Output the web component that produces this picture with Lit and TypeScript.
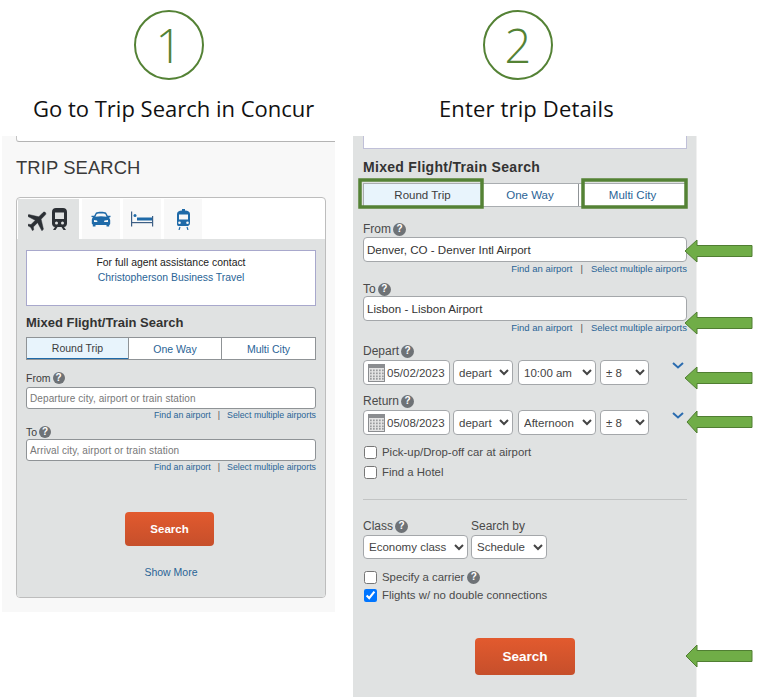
import { LitElement, html, css, svg } from "lit";
import { customElement } from "lit/decorators.js";

const help = html`<span class="help">?</span>`;

const planeTrainIcon = html`<svg class="ico" width="41" height="24" viewBox="0 0 41 24" aria-hidden="true">
  <g fill="#2c3035">
    <path transform="translate(-2 0) rotate(45 12 12) scale(1.100)" stroke="#2c3035" stroke-width="0.400" d="M21 16v-2l-8-5V3.500c0-.83-.67-1.500-1.500-1.500S10 2.670 10 3.500V9l-8 5v2l8-2.500V19l-2 1.500V22l3.500-1 3.500 1v-1.500L13 19v-5.500l8 2.500z"/>
    <path transform="translate(-1 0)" fill-rule="evenodd" d="M29 1h7c2.500 0 4 1.600 4 4v11.500c0 2-1.300 3.300-3 3.500l2 3h-2.500l-2-3h-4l-2 3H26l2-3c-1.700-.2-3-1.500-3-3.500V5c0-2.400 1.500-4 4-4zM28 5.500V12h9V5.500zm1.500 9a1.500 1.500 0 1 0 0 3 1.500 1.500 0 0 0 0-3zm6 0a1.500 1.500 0 1 0 0 3 1.500 1.500 0 0 0 0-3z"/>
  </g>
</svg>`;

const carIcon = html`<svg class="ico" width="20" height="16" viewBox="0 0 20 16" aria-hidden="true">
  <path fill="#1f6aa8" fill-rule="evenodd" d="M5 1.500C7 .5 13 .5 15 1.500l1.800 3.200H19.500v1.300l-1.500.7c.8.8 1.200 1.600 1.200 2.600v3.200c0 .8-.3 1.200-1 1.500V15.500h-2.700v-1.500H4.500v1.500H1.800V13.500c-.7-.3-1-.7-1-1.500V8.800c0-1 .4-1.800 1.200-2.600L.5 6V4.700h2.700zM5.700 3 4.400 5.700c3.500-.7 7.700-.7 11.200 0L14.300 3c-2-.6-6.600-.6-8.600 0zM3 9v2h3.500L6 9.500zm14 0-3.500.5-.5 1.500H17z"/>
</svg>`;

const bedIcon = html`<svg class="ico" width="24" height="16" viewBox="0 0 24 16" aria-hidden="true">
  <rect x="1" y="0.500" width="1.200" height="15" fill="#3d5f85"/>
  <rect x="22" y="5" width="1.200" height="10.500" fill="#3d5f85"/>
  <rect x="2" y="11" width="20" height="1.200" fill="#3d5f85"/>
  <rect x="7" y="6.500" width="15" height="3" fill="#1f6aa8"/>
  <circle cx="5" cy="4.500" r="1.500" fill="#1f6aa8"/>
</svg>`;

const railIcon = html`<svg class="ico" width="15" height="21" viewBox="0 0 15 21" aria-hidden="true">
  <path fill="#1f6aa8" fill-rule="evenodd" d="M6 0h3v1.500c3 .2 5 1.300 5 3.500v9c0 1.700-1 2.700-2.500 3H2.500C1 16.700 1 15.700 1 14V5c0-2.200 2-3.300 5-3.500zM3 5.500v5h9v-5zM3.500 12.500a1.300 1.300 0 1 0 0 2.600 1.300 1.300 0 0 0 0-2.600zm8 0a1.300 1.300 0 1 0 0 2.600 1.300 1.300 0 0 0 0-2.600z"/>
  <path stroke="#1f6aa8" stroke-width="1.200" d="M4 18l-1 3M11 18l1 3"/>
</svg>`;

const calendarIcon = html`<svg class="cal" width="17" height="18" viewBox="0 0 17 18" aria-hidden="true">
  <rect width="17" height="18" fill="#8b8d90"/>
  <rect x="1" y="4" width="15" height="13" fill="#e4e4e4"/>
  <g fill="#9a9c9f">
    ${[2, 5, 8, 11, 14].flatMap((x) =>
      [5.500, 8.500, 11.500, 14].map((y) => svg`<rect x=${x} y=${y} width="1.700" height="1.700"/>`)
    )}
  </g>
</svg>`;

const chevron = html`<svg class="chev" width="12" height="7" viewBox="0 0 12 7" aria-hidden="true">
  <path d="M1 1l5 4.500L11 1" fill="none" stroke="#2b6cb0" stroke-width="2"/>
</svg>`;

const arrow = (tip: number, y: number, hh: number) => {
  const sh = 5.500;
  const n = 697;
  const pts = `${tip},${y} ${n},${y - hh} ${n},${y - sh} 752,${y - sh} 752,${y + sh} ${n},${y + sh} ${n},${y + hh}`;
  return svg`<polygon points=${pts} fill="#70ad47" stroke="#507e32" stroke-width="1"/>`;
};

@customElement("app-root")
export class AppRoot extends LitElement {
  static styles = css`
    :host {
      display: block;
      position: relative;
      width: 759px;
      height: 700px;
      overflow: hidden;
      background: #fff;
      font-family: "Liberation Sans", Arial, sans-serif;
      color: #3c3c3c;
    }
    * { box-sizing: border-box; }
    .cols { display: flex; align-items: flex-start; }
    .col-a { width: 333px; margin-left: 2px; }
    .col-b { width: 344px; margin-left: 18px; }
    .head { height: 136px; }
    .circle {
      width: 70px; height: 70px;
      position: relative; top: 10px;
      border: 2px solid #548235;
      border-radius: 50%;
      display: flex; align-items: center; justify-content: center;
      font: 300 47px "Open Sans", sans-serif;
      color: #548235;
      line-height: 1;
    }
    .col-a .circle { margin-left: 132px; }
    .col-b .circle { margin-left: 130px; }
    .step {
      font: 400 22px "Open Sans", sans-serif;
      color: #111;
      white-space: nowrap;
      margin-top: 23px;
      line-height: 30px;
    }
    .col-a .step { margin-left: 31px; }
    .col-b .step { margin-left: 86px; letter-spacing: 0.150px; }

    .pa { background: #f8f8f8; height: 476px; padding: 0 9px 0 14px; }
    .stub {
      height: 6px; margin-right: -9px; background: #fff;
      border-left: 1px solid #c4c4c4; border-bottom: 1px solid #b4b4b4;
      border-bottom-left-radius: 3px;
    }
    h1 {
      margin: 15px 0 0; font-size: 18.400px; font-weight: 400; line-height: 21px;
      color: #3a3a3a; letter-spacing: 0.100px;
    }
    .card {
      margin-top: 19px; height: 401px; background: #fff;
      border: 1px solid #bdbdbd; border-radius: 4px;
      display: flex; flex-direction: column; padding: 1px 0 0;
    }
    .tabs { display: flex; height: 40px; gap: 3px; padding-left: 1px; flex: none; }
    .tab {
      width: 38px; background: #f8f8f8; display: flex; align-items: center; justify-content: center;
    }
    .tab.active { width: 61px; background: #e0e2e2; }
    .ico { display: block; }
    .cbody {
      flex: 1; background: #e0e2e2; padding: 11px 9px 0; border-radius: 0 0 3px 3px;
      display: flex; flex-direction: column;
    }
    .notice {
      height: 56px; flex: none; background: #fff; border: 1px solid #a8a8cc;
      font-size: 10.400px; line-height: 15px; text-align: center; color: #222; padding-top: 4px;
    }
    .link { color: #2a6496; }
    .title-a { font-size: 13px; font-weight: 700; color: #333; margin-top: 9px; line-height: 16px; }
    .seg {
      display: grid; height: 23px; margin-top: 6px; background: #fff; flex: none;
      border: 1px solid #8f9396; font-size: 10.500px; color: #2a6496;
    }
    .seg > div { display: flex; align-items: center; justify-content: center; border-left: 1px solid #8f9396; }
    .seg > .on { background: #e8f4fc; color: #3c3c3c; border-left: 0; border-bottom: 1px solid #1f6aa8; }
    .seg-a { grid-template-columns: 101px 93px 1fr; }
    .lbl { display: flex; align-items: center; gap: 2px; font-size: 10.500px; color: #3c3c3c; line-height: 14px; }
    .help {
      display: inline-flex; align-items: center; justify-content: center;
      width: 12px; height: 12px; border-radius: 50%; flex: none;
      background: #6e7276; color: #fff; font-size: 10px; font-weight: 700; line-height: 1;
    }
    .field {
      background: #fff; border: 1px solid #8f9396; border-radius: 3px; flex: none;
      display: flex; align-items: center; white-space: nowrap;
    }
    .field-a { height: 22px; font-size: 10px; padding-left: 3px; margin-top: 2px; color: #777; letter-spacing: 0.100px; }
    .field-a.tight { margin-top: 0; }
    .links { display: flex; justify-content: flex-end; gap: 7px; color: #2a6496; white-space: nowrap; }
    .links i { font-style: normal; color: #555; }
    .links-a { font-size: 8.800px; line-height: 12px; margin-top: 0; }
    .lbl-a1 { margin-top: 11px; }
    .lbl-a2 { margin-top: 4px; }
    .btn {
      display: flex; align-items: center; justify-content: center; flex: none;
      background: linear-gradient(#e25a2e, #c64f2b);
      border-radius: 4px; color: #fff; font-weight: 700; align-self: flex-start;
    }
    .btn-a { width: 89px; height: 34px; margin: 39px 0 0 99px; font-size: 11.500px; }
    .more { text-align: center; font-size: 10.500px; color: #2a6496; margin-top: 19px; line-height: 14px; }

    .pb {
      background: #e0e2e2; height: 561px; padding: 0 9px 0 10px; border-right: 1px solid #f0f0f0;
      display: flex; flex-direction: column;
    }
    .stubb { height: 13px; background: #fff; border: 1px solid #c0c0d8; border-top: 0; flex: none; }
    .title-b { font-size: 14px; font-weight: 700; color: #333; margin-top: 10px; line-height: 17px; letter-spacing: 0.300px; }
    .seg-b { grid-template-columns: 117px 97px 1fr; height: 24px; margin-top: 7px; font-size: 11.500px; border-color: #a9adb0; }
    .seg-b > .on { border-bottom: 0; }
    .lbl-b { font-size: 12px; gap: 2px; color: #4a4a4a; line-height: 14px; }
    .lbl-b .help { width: 13px; height: 13px; }
    .field-b { height: 25px; font-size: 11.600px; color: #333; padding-left: 3px; margin-top: 1px; border-color: #a4a7aa; border-radius: 4px; }
    .field-b.tight { margin-top: 0; }
    .links-b { font-size: 9.500px; line-height: 13px; gap: 8px; }
    .row { display: flex; gap: 4px; margin-top: 2px; height: 25px; flex: none; }
    .date {
      width: 87px; height: 25px; background: #fff; border: 1px solid #a4a7aa; border-radius: 4px; flex: none;
      display: flex; align-items: center; gap: 2px; padding-left: 4px; font-size: 11.500px; color: #444;
    }
    select {
      height: 100%; font: 11.500px "Liberation Sans", Arial, sans-serif; color: #444; flex: none;
      background-color: #fff; border: 1px solid #a4a7aa; border-radius: 4px; padding: 0 0 0 1px; margin: 0;
    }
    .w60 { width: 60px; margin-left: -1px; margin-right: 1px; }
    .w78 { width: 78px; }
    .w49 { width: 49px; }
    .chev { margin-left: 19px; margin-top: 2px; flex: none; }
    .check { display: flex; align-items: center; gap: 5px; font-size: 11.400px; color: #4a4a4a; height: 14px; padding-left: 1px; }
    .check input { width: 13px; height: 13px; margin: 0; flex: none; }
    .check .help { width: 13px; height: 13px; margin-left: -2px; }
    hr { border: 0; border-top: 1px solid #c2c4c4; margin: 20px 0 0; width: 100%; }
    .pair { display: flex; gap: 3px; margin-top: 19px; }
    .pair > div { display: flex; flex-direction: column; gap: 2px; }
    .pair select { height: 24px; }
    .w105 { width: 105px; }
    .w76 { width: 76px; }
    .btn-b { width: 100px; height: 37px; margin: 36px 0 0 112px; font-size: 13.500px; }

    .overlay { position: absolute; left: 0; top: 0; pointer-events: none; }
  `;

  render() {
    const links = (c: string) => html`<div class="links ${c}"><span>Find an airport</span><i>|</i><span>Select multiple airports</span></div>`;
    return html`
      <div class="cols">
        <section class="col-a">
          <div class="head">
            <div class="circle">1</div>
            <div class="step">Go to Trip Search in Concur</div>
          </div>
          <div class="pa">
            <div class="stub"></div>
            <h1>TRIP SEARCH</h1>
            <div class="card">
              <div class="tabs">
                <div class="tab active">${planeTrainIcon}</div>
                <div class="tab">${carIcon}</div>
                <div class="tab">${bedIcon}</div>
                <div class="tab">${railIcon}</div>
              </div>
              <div class="cbody">
                <div class="notice">
                  <div>For full agent assistance contact</div>
                  <div class="link">Christopherson Business Travel</div>
                </div>
                <div class="title-a">Mixed Flight/Train Search</div>
                <div class="seg seg-a"><div class="on">Round Trip</div><div>One Way</div><div>Multi City</div></div>
                <div class="lbl lbl-a1">From ${help}</div>
                <div class="field field-a">Departure city, airport or train station</div>
                ${links("links-a")}
                <div class="lbl lbl-a2">To ${help}</div>
                <div class="field field-a tight">Arrival city, airport or train station</div>
                ${links("links-a")}
                <div class="btn btn-a">Search</div>
                <div class="more">Show More</div>
              </div>
            </div>
          </div>
        </section>

        <section class="col-b">
          <div class="head">
            <div class="circle">2</div>
            <div class="step">Enter trip Details</div>
          </div>
          <div class="pb">
            <div class="stubb"></div>
            <div class="title-b">Mixed Flight/Train Search</div>
            <div class="seg seg-b"><div class="on">Round Trip</div><div>One Way</div><div>Multi City</div></div>
            <div class="lbl lbl-b" style="margin-top:15px">From ${help}</div>
            <div class="field field-b">Denver, CO - Denver Intl Airport</div>
            ${links("links-b")}
            <div class="lbl lbl-b" style="margin-top:7px">To ${help}</div>
            <div class="field field-b tight">Lisbon - Lisbon Airport</div>
            ${links("links-b")}
            <div class="lbl lbl-b" style="margin-top:10px">Depart ${help}</div>
            <div class="row">
              <div class="date">${calendarIcon}05/02/2023</div>
              <select class="w60"><option>depart</option></select>
              <select class="w78"><option>10:00 am</option></select>
              <select class="w49"><option>± 8</option></select>
              ${chevron}
            </div>
            <div class="lbl lbl-b" style="margin-top:9px">Return ${help}</div>
            <div class="row">
              <div class="date">${calendarIcon}05/08/2023</div>
              <select class="w60"><option>depart</option></select>
              <select class="w78"><option>Afternoon</option></select>
              <select class="w49"><option>± 8</option></select>
              ${chevron}
            </div>
            <label class="check" style="margin-top:10px"><input type="checkbox" />Pick-up/Drop-off car at airport</label>
            <label class="check" style="margin-top:6px"><input type="checkbox" />Find a Hotel</label>
            <hr />
            <div class="pair">
              <div><div class="lbl lbl-b">Class ${help}</div><select class="w105"><option>Economy class</option></select></div>
              <div><div class="lbl lbl-b">Search by</div><select class="w76"><option>Schedule</option></select></div>
            </div>
            <label class="check" style="margin-top:11px"><input type="checkbox" />Specify a carrier ${help}</label>
            <label class="check" style="margin-top:4px"><input type="checkbox" checked />Flights w/ no double connections</label>
            <div class="btn btn-b">Search</div>
          </div>
        </section>
      </div>

      <svg class="overlay" width="759" height="700" viewBox="0 0 759 700" aria-hidden="true">
        <rect x="360" y="180" width="122" height="27" fill="none" stroke="#548235" stroke-width="3.500"/>
        <rect x="583" y="180" width="103" height="27" fill="none" stroke="#548235" stroke-width="3.500"/>
        ${arrow(685, 251, 11)}
        ${arrow(685, 323, 11)}
        ${arrow(685, 378, 11)}
        ${arrow(687, 422, 11)}
        ${arrow(686, 656, 11)}
      </svg>
    `;
  }
}
